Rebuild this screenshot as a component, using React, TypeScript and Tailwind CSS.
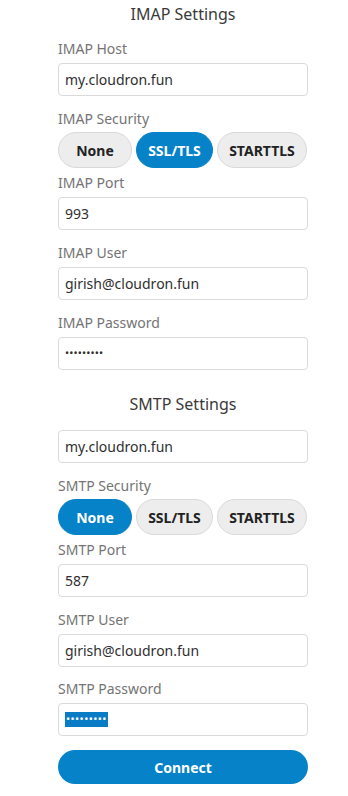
import React from 'react';

const font = { fontFamily: '"Noto Sans", "Open Sans", Arial, sans-serif' };

type Choice = 'None' | 'SSL/TLS' | 'STARTTLS';

const Label = ({ text, className = '' }: { text: string; className?: string }) => (
  <div className={`h-5 text-[14px] leading-5 text-[#747474] ${className}`}>{text}</div>
);

const Field = ({ value }: { value: string }) => (
  <div className="mt-1 flex h-[33px] items-center rounded-[4px] border border-[#dadada] bg-white px-[6px] text-[14px] text-[#2f2f2f]">
    {value}
  </div>
);

const Dots = ({ selected }: { selected?: boolean }) => (
  <div className="mt-1 flex h-[33px] items-center rounded-[4px] border border-[#dadada] bg-white px-[6px]">
    {selected ? (
      <span className="flex h-[15px] items-center bg-[#0a7cc6] px-[1px] text-[11px] tracking-[0.4px] text-white">
        •••••••••
      </span>
    ) : (
      <span className="text-[11px] tracking-[0.1px] text-[#2f2f2f]">•••••••••</span>
    )}
  </div>
);

const Security = ({ active }: { active: Choice }) => {
  const opts: { name: Choice; w: string }[] = [
    { name: 'None', w: 'w-[74px]' },
    { name: 'SSL/TLS', w: 'w-[77px]' },
    { name: 'STARTTLS', w: 'w-[90px]' },
  ];
  return (
    <div className="mt-[3px] flex gap-1">
      {opts.map((o) => (
        <button
          key={o.name}
          className={`h-9 ${o.w} rounded-full border text-[14px] font-bold ${
            o.name === active
              ? 'border-[#0582c8] bg-[#0582c8] text-white'
              : 'border-[#d9d9d9] bg-[#ededed] text-[#222]'
          }`}
        >
          {o.name}
        </button>
      ))}
    </div>
  );
};

export default function App() {
  return (
    <div className="min-h-screen bg-white" style={font}>
      <div className="ml-[58px] flex w-[250px] flex-col pt-[2px]">
        <h2 className="h-6 text-center text-[16px] leading-6 text-[#3a3a3a]">IMAP Settings</h2>

        <Label text="IMAP Host" className="mt-[13px]" />
        <Field value="my.cloudron.fun" />

        <Label text="IMAP Security" className="mt-[13px]" />
        <Security active="SSL/TLS" />

        <Label text="IMAP Port" className="mt-[5px]" />
        <Field value="993" />

        <Label text="IMAP User" className="mt-[13px]" />
        <Field value="girish@cloudron.fun" />

        <Label text="IMAP Password" className="mt-[13px]" />
        <Dots />

        <h2 className="mt-[22px] h-6 text-center text-[16px] leading-6 text-[#3a3a3a]">SMTP Settings</h2>
        <div className="mt-[10px]">
          <Field value="my.cloudron.fun" />
        </div>

        <Label text="SMTP Security" className="mt-[13px]" />
        <Security active="None" />

        <Label text="SMTP Port" className="mt-[5px]" />
        <Field value="587" />

        <Label text="SMTP User" className="mt-[13px]" />
        <Field value="girish@cloudron.fun" />

        <Label text="SMTP Password" className="mt-[12px]" />
        <Dots selected />

        <button className="mt-[14px] h-[34px] rounded-full bg-[#0582c8] text-[14px] font-bold text-white">
          Connect
        </button>
      </div>
    </div>
  );
}
